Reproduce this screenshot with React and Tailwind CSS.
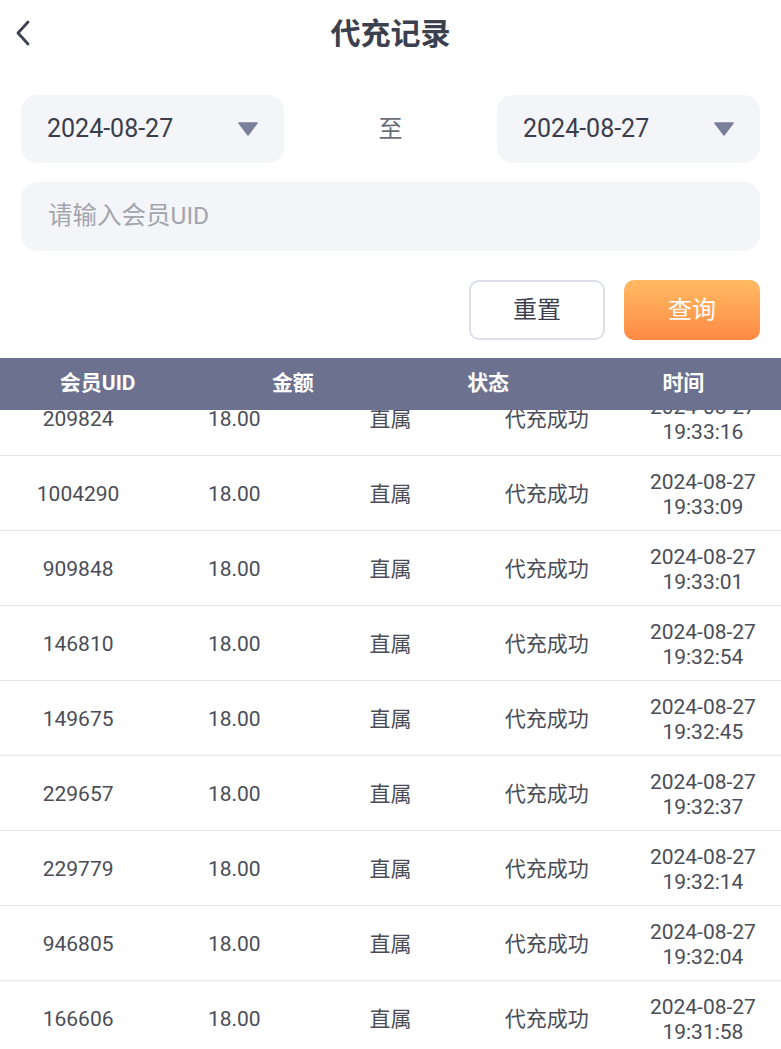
import React from "react";

const rows = [
  { uid: "209824", time: "19:33:16" },
  { uid: "1004290", time: "19:33:09" },
  { uid: "909848", time: "19:33:01" },
  { uid: "146810", time: "19:32:54" },
  { uid: "149675", time: "19:32:45" },
  { uid: "229657", time: "19:32:37" },
  { uid: "229779", time: "19:32:14" },
  { uid: "946805", time: "19:32:04" },
  { uid: "166606", time: "19:31:58" },
];

const font = { fontFamily: 'Roboto, "Noto Sans CJK SC", sans-serif' };

const DateBox = () => (
  <div className="w-[263px] h-[68px] rounded-[16px] bg-[#f4f5f9] flex items-center justify-between pl-[26px] pr-[26px]">
    <span className="text-[25px] text-[#3a3d4c]">2024-08-27</span>
    <svg width="20" height="14" viewBox="0 0 20 14">
      <path d="M1 1 L19 1 L10 13 Z" fill="#7a7f9a" stroke="#7a7f9a" strokeWidth="1.5" strokeLinejoin="round" />
    </svg>
  </div>
);

export default function App() {
  return (
    <div className="w-[781px] h-[1049px] overflow-hidden bg-white" style={font}>
      {/* header */}
      <div className="h-[66px] flex items-center">
        <div className="w-[60px] pl-[13px] flex items-center">
          <svg width="20" height="28" viewBox="0 0 20 28">
            <path d="M15 3 L5 14 L15 25" fill="none" stroke="#3d4150" strokeWidth="2.8" strokeLinecap="round" strokeLinejoin="round" />
          </svg>
        </div>
        <div className="flex-1 text-center text-[30px] font-bold text-[#3b3f4e]">代充记录</div>
        <div className="w-[60px]" />
      </div>

      {/* filters */}
      <div className="px-[21px] pt-[29px]">
        <div className="flex items-center">
          <DateBox />
          <div className="flex-1 text-center text-[24px] text-[#6b6e7a]">至</div>
          <DateBox />
        </div>
        <div className="mt-[19px] h-[69px] rounded-[16px] bg-[#f4f5f9] flex items-center pl-[27px]">
          <span className="text-[24.5px] text-[#a3a5ad]">请输入会员UID</span>
        </div>
        <div className="mt-[29px] flex justify-end gap-[19px]">
          <button className="w-[136px] h-[60px] rounded-[10px] border-2 border-[#dcdfeb] bg-white text-[24px] text-[#3b3f4e]">
            重置
          </button>
          <button className="w-[136px] h-[60px] rounded-[10px] bg-gradient-to-b from-[#ffbb62] to-[#ff8944] text-[24px] text-white">
            查询
          </button>
        </div>
      </div>

      {/* table */}
      <div className="mt-[18px]">
        <div className="relative z-10 h-[52px] bg-[#6b718e] grid grid-cols-4 items-center text-white text-[21px] font-bold">
          <div className="text-center">会员UID</div>
          <div className="text-center">金额</div>
          <div className="text-center">状态</div>
          <div className="text-center">时间</div>
        </div>
        <div className="-mt-[29px]">
          {rows.map((r) => (
            <div key={r.uid} className="h-[75px] pt-[4px] border-b border-[#e6e6e9] grid grid-cols-5 items-center text-[21px] text-[#4a4d58]">
              <div className="text-center">{r.uid}</div>
              <div className="text-center">18.00</div>
              <div className="text-center">直属</div>
              <div className="text-center">代充成功</div>
              <div className="text-center leading-[25px]">
                <div>2024-08-27</div>
                <div>{r.time}</div>
              </div>
            </div>
          ))}
        </div>
      </div>
    </div>
  );
}
